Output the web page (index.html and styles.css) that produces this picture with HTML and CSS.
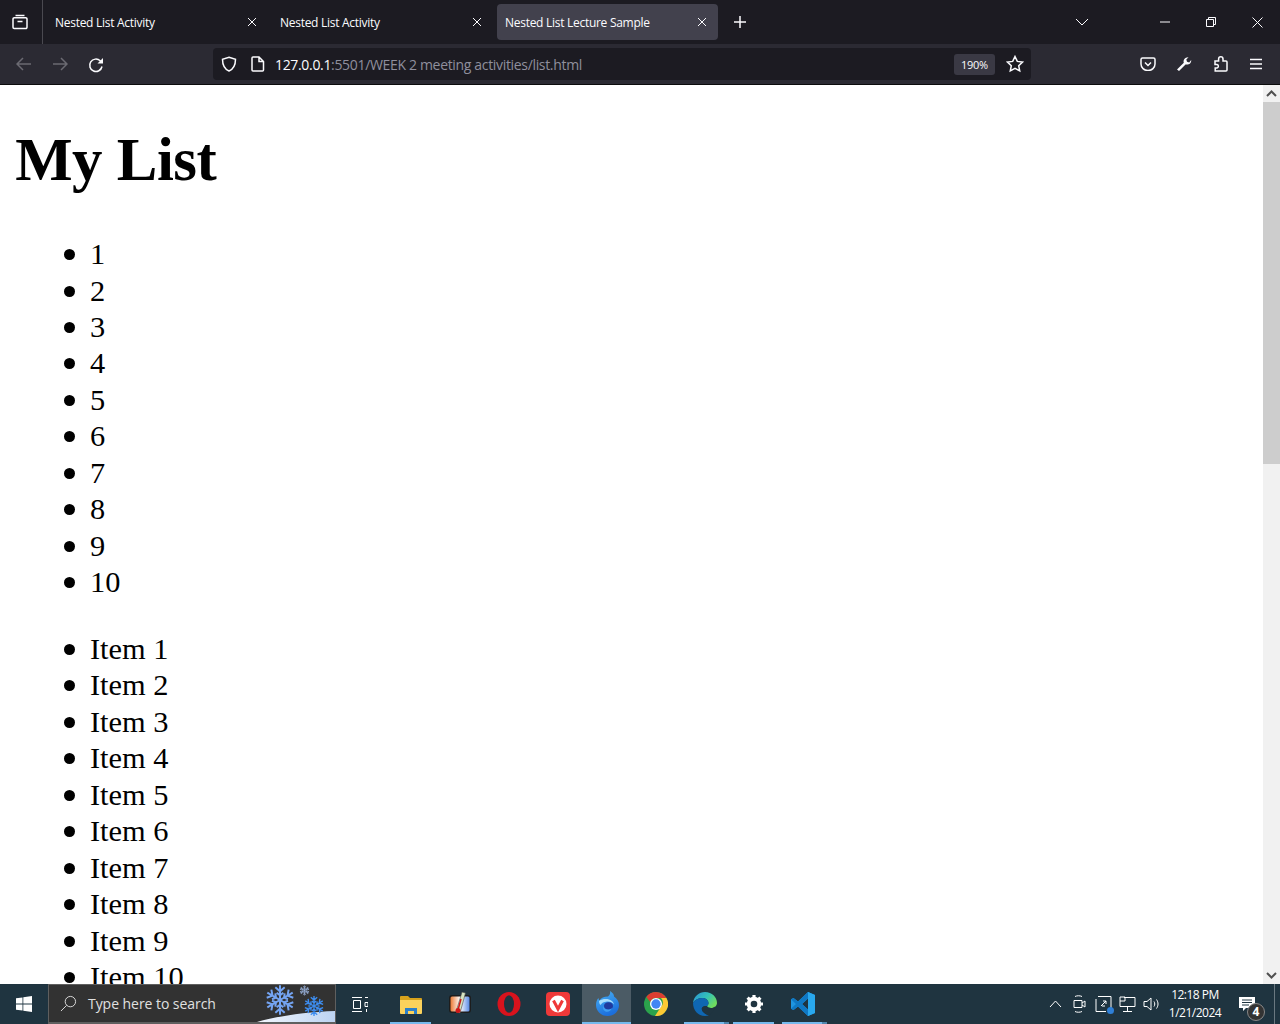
FILE: index.html

```html
<!DOCTYPE html>
<html lang="en">
<head>
  <meta charset="UTF-8" />
  <title>Nested List Lecture Sample</title>
  <link rel="stylesheet" href="styles.css">
</head>
<body>
  <svg class="defs" width="0" height="0">
    <defs>
      <linearGradient id="edgeTop" x1="0" y1="0" x2="1" y2="0.6">
        <stop offset="0" stop-color="#2a8fd8"/>
        <stop offset="0.55" stop-color="#33c2b8"/>
        <stop offset="1" stop-color="#6fdc5e"/>
      </linearGradient>
      <linearGradient id="foxBody" x1="0" y1="0" x2="0.4" y2="1">
        <stop offset="0" stop-color="#49b2f5"/>
        <stop offset="1" stop-color="#1c6fdc"/>
      </linearGradient>
      <linearGradient id="thermo" x1="0" y1="0" x2="1" y2="0">
        <stop offset="0" stop-color="#ec7a35"/>
        <stop offset="0.5" stop-color="#fff"/>
        <stop offset="1" stop-color="#5a8be6"/>
      </linearGradient>
      <linearGradient id="hillFill" x1="0" y1="0" x2="1" y2="0">
        <stop offset="0" stop-color="#f2f6fd"/>
        <stop offset="1" stop-color="#bcd3f2"/>
      </linearGradient>
    </defs>
    <symbol id="flake" viewBox="-12 -12 24 24">
      <g fill="none" stroke-width="1.5">
        <path d="M0 0V-11M-3.500 -9.500L0 -6.500L3.500 -9.500M-2.500 -5.500L0 -3.500L2.500 -5.500"/>
        <path transform="rotate(60)" d="M0 0V-11M-3.500 -9.500L0 -6.500L3.500 -9.500M-2.500 -5.500L0 -3.500L2.500 -5.500"/>
        <path transform="rotate(120)" d="M0 0V-11M-3.500 -9.500L0 -6.500L3.500 -9.500M-2.500 -5.500L0 -3.500L2.500 -5.500"/>
        <path transform="rotate(180)" d="M0 0V-11M-3.500 -9.500L0 -6.500L3.500 -9.500M-2.500 -5.500L0 -3.500L2.500 -5.500"/>
        <path transform="rotate(240)" d="M0 0V-11M-3.500 -9.500L0 -6.500L3.500 -9.500M-2.500 -5.500L0 -3.500L2.500 -5.500"/>
        <path transform="rotate(300)" d="M0 0V-11M-3.500 -9.500L0 -6.500L3.500 -9.500M-2.500 -5.500L0 -3.500L2.500 -5.500"/>
      </g>
    </symbol>
  </svg>

  <header class="tabstrip">
    <div class="tab-manager">
      <svg width="16" height="16" viewBox="0 0 16 16" class="ico"><path d="M3.500 1.500h9M1 5a1.200 1.200 0 0 1 1.200-1.200h11.600A1.200 1.200 0 0 1 15 5v8.300a1.200 1.200 0 0 1-1.200 1.200H2.200A1.200 1.200 0 0 1 1 13.300zM5.500 7.500h5"/></svg>
    </div>
    <div class="tab">
      <span class="tab-title">Nested List Activity</span>
      <svg width="10" height="10" viewBox="0 0 10 10" class="ico thin"><path d="M1 1l8 8M9 1l-8 8"/></svg>
    </div>
    <div class="tab">
      <span class="tab-title">Nested List Activity</span>
      <svg width="10" height="10" viewBox="0 0 10 10" class="ico thin"><path d="M1 1l8 8M9 1l-8 8"/></svg>
    </div>
    <div class="tab active">
      <span class="tab-title">Nested List Lecture Sample</span>
      <svg width="10" height="10" viewBox="0 0 10 10" class="ico thin"><path d="M1 1l8 8M9 1l-8 8"/></svg>
    </div>
    <div class="new-tab">
      <svg width="14" height="14" viewBox="0 0 14 14" class="ico"><path d="M7 1v12M1 7h12"/></svg>
    </div>
    <div class="tab-list">
      <svg width="14" height="8" viewBox="0 0 14 8" class="ico thin"><path d="M1 1l6 6 6-6"/></svg>
    </div>
    <div class="win-btn">
      <svg width="10" height="2" viewBox="0 0 10 2" class="ico thin"><path d="M0 1h10"/></svg>
    </div>
    <div class="win-btn">
      <svg width="10" height="10" viewBox="0 0 10 10" class="ico thin"><path d="M.5 2.500h7v7h-7zM2.500 2.500V.5h7v7h-2"/></svg>
    </div>
    <div class="win-btn">
      <svg width="11" height="11" viewBox="0 0 11 11" class="ico thin"><path d="M.5.5l10 10M10.500.5l-10 10"/></svg>
    </div>
  </header>

  <nav class="navbar">
    <div class="nav-btn dim">
      <svg width="16" height="14" viewBox="0 0 16 14" class="ico"><path d="M15 7H1.500M7 1L1 7l6 6"/></svg>
    </div>
    <div class="nav-btn dim">
      <svg width="16" height="14" viewBox="0 0 16 14" class="ico"><path d="M1 7h13.500M9 1l6 6-6 6"/></svg>
    </div>
    <div class="nav-btn">
      <svg width="16" height="16" viewBox="0 0 16 16" class="ico reload"><path d="M14 9.500A6.200 6.200 0 1 1 12.200 3.800L14 5.500"/><path class="solid" d="M15 1v5.500H9.500z"/></svg>
    </div>
    <div class="urlbar">
      <svg width="16" height="16" viewBox="0 0 16 16" class="ico url-shield"><path d="M8 1.200L14.500 3.200C14.500 9 12.500 13 8 15C3.500 13 1.500 9 1.500 3.200z"/></svg>
      <svg width="14" height="16" viewBox="0 0 14 16" class="ico url-page"><path d="M2 1h6l4.500 4.500v8.500a1 1 0 0 1-1 1H2a1 1 0 0 1-1-1V2a1 1 0 0 1 1-1zM8 1v4.500h4.500"/></svg>
      <span class="url"><span class="host">127.0.0.1</span>:5501/WEEK 2 meeting activities/list.html</span>
      <span class="zoom-badge">190%</span>
      <svg width="18" height="18" viewBox="0 0 18 18" class="ico url-star"><path d="M9 1.500l2.300 4.900 5.200.7-3.800 3.600 1 5.200L9 13.300l-4.700 2.600 1-5.200L1.500 7.100l5.200-.7z"/></svg>
    </div>
    <div class="nav-tools">
      <div class="nav-btn">
        <svg width="16" height="14" viewBox="0 0 16 14" class="ico"><path d="M1 2.500a1.500 1.500 0 0 1 1.500-1.500h11A1.500 1.500 0 0 1 15 2.500V7a7 6.500 0 0 1-14 0zM5 5.500l3 3 3-3"/></svg>
      </div>
      <div class="nav-btn">
        <svg width="16" height="16" viewBox="0 0 16 16" class="ico-fill"><path d="M1 13.500L7.800 6.700C7 4 9 1 12.500 1.200L10.300 3.500l.7 2.200 2.200.7L15.200 4C15.500 7.500 12.500 9.200 9.500 8.400L3 15z"/></svg>
      </div>
      <div class="nav-btn">
        <svg width="16" height="16" viewBox="0 0 16 16" class="ico"><path d="M6 15h8a1 1 0 0 0 1-1V6a1 1 0 0 0-1-1h-3V3a2.200 2.200 0 0 0-4.400 0v2H3v3.500h2a1.800 1.800 0 0 1 0 3.500H3.200V15z"/></svg>
      </div>
      <div class="nav-btn">
        <svg width="14" height="12" viewBox="0 0 14 12" class="ico"><path d="M1 1.500h12M1 6h12M1 10.500h12"/></svg>
      </div>
    </div>
  </nav>

  <div class="viewport">
    <main class="page">
      <h1>My List</h1>
      <ul>
        <li>1</li>
        <li>2</li>
        <li>3</li>
        <li>4</li>
        <li>5</li>
        <li>6</li>
        <li>7</li>
        <li>8</li>
        <li>9</li>
        <li>10</li>
      </ul>
      <ul>
        <li>Item 1</li>
        <li>Item 2</li>
        <li>Item 3</li>
        <li>Item 4</li>
        <li>Item 5</li>
        <li>Item 6</li>
        <li>Item 7</li>
        <li>Item 8</li>
        <li>Item 9</li>
        <li>Item 10</li>
      </ul>
    </main>
    <div class="scrollbar">
      <div class="sb-arrow"><svg width="11" height="7" viewBox="0 0 11 7"><path d="M1 6l4.500-4.500L10 6" fill="none" stroke="#505050" stroke-width="2"/></svg></div>
      <div class="sb-track"><div class="sb-thumb"></div></div>
      <div class="sb-arrow"><svg width="11" height="7" viewBox="0 0 11 7"><path d="M1 1l4.500 4.500L10 1" fill="none" stroke="#505050" stroke-width="2"/></svg></div>
    </div>
  </div>

  <footer class="taskbar">
    <div class="start">
      <svg width="16" height="16" viewBox="0 0 16 16" fill="#fff"><path d="M0 2.300l6.500-.9v6.200H0zM7.300 1.300L16 0v7.600H7.300zM0 8.400h6.500v6.200L0 13.700zM7.300 8.400H16V16l-8.700-1.300z"/></svg>
    </div>
    <div class="search">
      <svg width="17" height="17" viewBox="0 0 18 18" class="ico thin"><circle cx="11" cy="7" r="5.500"/><path d="M7 11l-6 6"/></svg>
      <span class="search-text">Type here to search</span>
      <div class="snow">
        <svg class="hill" width="78" height="11" viewBox="0 0 78 11"><path d="M0 11C20 5 50 1 78 0v11z" fill="url(#hillFill)"/></svg>
        <svg class="flake-a" width="32" height="32"><use href="#flake" stroke="#74a4f2"/></svg>
        <svg class="flake-b" width="11" height="11"><use href="#flake" stroke="#9db6e0"/></svg>
        <svg class="flake-c" width="22" height="22"><use href="#flake" stroke="#3d8df0"/></svg>
      </div>
    </div>
    <div class="task-icons">
      <div class="task-item task-view">
        <svg width="16" height="15" viewBox="0 0 16 15" class="ico thin"><path d="M0 .5h10M0 14.500h10M1.500 3.500h7v8h-7zM13 .5h3M13 5.500h3v4h-3zM14.500 12v3"/></svg>
      </div>
      <div class="task-item running">
        <svg width="22" height="19" viewBox="0 0 22 19"><path d="M0 2a1 1 0 0 1 1-1h7l2 2h11a1 1 0 0 1 1 1v3H0z" fill="#d8a21c"/><path d="M0 5h22v13a1 1 0 0 1-1 1H1a1 1 0 0 1-1-1z" fill="#fbd25c"/><path d="M5 13h12v6h-3v-3H8v3H5z" fill="#2b7fc9"/></svg>
      </div>
      <div class="task-item">
        <svg width="22" height="24" viewBox="0 0 22 24"><rect x="0" y="3" width="22" height="18" rx="3" fill="#1d1d1d"/><rect x="1.500" y="4.500" width="19" height="15" rx="1.500" fill="url(#thermo)"/><path d="M13 0l3.500 1L11 21l-4-1z" fill="#d5e3c0" stroke="#444" stroke-width=".6"/><circle cx="9" cy="18.500" r="2.500" fill="#d01818"/><path d="M9 18l3-11" stroke="#d01818" stroke-width="1.500"/></svg>
      </div>
      <div class="task-item">
        <svg width="24" height="24" viewBox="0 0 24 24"><ellipse cx="12" cy="12" rx="11.500" ry="12" fill="#d8131d"/><ellipse cx="12" cy="12" rx="5" ry="8.800" fill="#1f3440"/></svg>
      </div>
      <div class="task-item">
        <svg width="24" height="24" viewBox="0 0 24 24"><rect width="24" height="24" rx="4" fill="#ef3939"/><circle cx="12" cy="12" r="8.500" fill="#fff"/><path d="M7.500 8.500L12 17l4.500-8.500" fill="none" stroke="#ef3939" stroke-width="3"/></svg>
      </div>
      <div class="task-item current">
        <svg width="24" height="26" viewBox="0 0 24 26"><path d="M15 0c3 2 4 3.500 4 5.500 3 2 5 5 5 8.500 0 6.500-5 11-11.500 11S1 20 1 14C1 11 2 8.500 3.500 7c0 1 .5 2 1 2.500C6 7 9 5.500 13 5.500 15 4 15.500 2 15 0z" fill="url(#foxBody)"/><path d="M4 10c3-2 7-2.500 10-1.500 2.500.8 4.500 2.500 5 5-1.500-2-4-3.300-7-3-3 .3-5.500 1.500-6.500 3.500C4.500 13 4 11.500 4 10z" fill="#a6dcfb"/><ellipse cx="13.500" cy="15" rx="4.500" ry="3.800" fill="#1f3a9e"/><path d="M8 15c1 3 5 5 9 2-1 3-4 4.500-6.500 3.500C8.500 19.500 7.500 17 8 15z" fill="#3f9df0"/></svg>
      </div>
      <div class="task-item">
        <svg width="24" height="24" viewBox="0 0 24 24"><circle cx="12" cy="12" r="12" fill="#2ba24c"/><path d="M12 0a12 12 0 0 1 10.400 6H12a6 6 0 0 0-5.700 4.100L2.300 5A12 12 0 0 1 12 0z" fill="#dc3d31"/><path d="M22.400 6A12 12 0 0 1 11 24l5.800-9A6 6 0 0 0 17 6z" fill="#fcc934"/><circle cx="12" cy="12" r="6" fill="#fff"/><circle cx="12" cy="12" r="4.700" fill="#4285f4"/></svg>
      </div>
      <div class="task-item stacked">
        <svg width="24" height="24" viewBox="0 0 24 24"><path d="M0 11C1 4 6 0 12 0c7 0 12 5 12 11 0 3-3 5-6 5-2 0-4-.7-4-2 2-1.500 2-4 .2-6C11 4.500 3 6 0 11z" fill="url(#edgeTop)"/><path d="M0 11c3-5 11-6.500 14.200-3 1.800 2 1.800 4.500-.2 6-2.500 0-6 .5-5 4 .7 2.500 4 4.500 7 5.200-1.200.5-2.600.8-4 .8C5 24 0 18 0 11z" fill="#0f67b3"/><path d="M14 14c0 1.300 2 2 4 2 1.500 0 3-.5 4-1.500-1 4-3.500 7-6 8.700-3-.7-6.300-2.700-7-5.200-1-3.500 2.500-4 5-4z" fill="#1f3440"/></svg>
      </div>
      <div class="task-item running">
        <svg width="20" height="20" viewBox="0 0 20 20"><circle cx="10" cy="10" r="5.500" fill="none" stroke="#fff" stroke-width="3.500"/><path d="M10 1v18M1 10h18M3.600 3.600l12.800 12.800M16.400 3.600L3.600 16.400" stroke="#fff" stroke-width="3.200"/><circle cx="10" cy="10" r="3.300" fill="#1f3440"/></svg>
      </div>
      <div class="task-item stacked">
        <svg width="24" height="24" viewBox="0 0 24 24"><path d="M17 0l7 3v18l-7 3L7 14.500 2.500 18 0 16.800V7.200L2.500 6 7 9.500zM17 6.500l-6 5.500 6 5.500z" fill="#1f95e0"/><path d="M17 0l7 3v18l-7 3z" fill="#29a8ee"/><path d="M17 6.500V0L7 9.500 2.500 6 0 7.200 5 12l-5 4.800L2.500 18 7 14.500 17 24v-6.500L11 12z" fill="#0f78c4"/></svg>
      </div>
    </div>
    <div class="tray">
      <div class="tray-cell"><svg width="13" height="8" viewBox="0 0 13 8" class="ico thin"><path d="M1 7l5.500-6L12 7"/></svg></div>
      <div class="tray-cell"><svg width="13" height="18" viewBox="0 0 13 18" class="ico thin"><path d="M2 1.500c2-1 5-1 7 0M2 16.500c2 1 5 1 7 0M1 5.500h8v7H1zM9 8l3-2v6l-3-2"/></svg></div>
      <div class="tray-cell">
        <div class="tray-box">
          <svg width="17" height="16" viewBox="0 0 17 16" class="ico thin"><path d="M3 .5h13v11.500M1 15.500V3M1 15.500h10M6 10l5-5M8 5h3v3M10 10H7"/></svg>
          <span class="tray-dot"></span>
        </div>
      </div>
      <div class="tray-cell"><svg width="17" height="16" viewBox="0 0 17 16" class="ico thin"><path d="M5 1.500h11v9H1V5M1 1h5v4H1zM8.500 10.500v4.500M4 15.500h9"/></svg></div>
      <div class="tray-cell"><svg width="17" height="14" viewBox="0 0 17 14" class="ico thin"><path d="M1 4.500h3l4-3.500v12L4 9.500H1zM11 4.500c1 1.500 1 3.500 0 5M13.500 2.500c2 3 2 6 0 9"/></svg></div>
    </div>
    <div class="clock">
      <span>12:18 PM</span>
      <span>1/21/2024</span>
    </div>
    <div class="notify">
      <svg width="16" height="14" viewBox="0 0 16 14" fill="#fff"><path d="M0 0h16v11H7l-3 3v-3H0z"/><path d="M3 3h10M3 5.500h10M3 8h7" stroke="#1f3440"/></svg>
      <span class="notify-count">4</span>
    </div>
    <div class="show-desktop"></div>
  </footer>
</body>
</html>
```

FILE: styles.css

```css
html, body { margin: 0; height: 100%; }
body { display: flex; flex-direction: column; height: 1024px; overflow: hidden; font-family: "Open Sans", "Noto Sans", sans-serif; background: #fff; }
.defs { position: absolute; }

.ico { fill: none; stroke: currentColor; stroke-width: 1.5; flex: none; }
.ico.thin { stroke-width: 1; }
.ico .solid { fill: currentColor; stroke: none; }
.ico-fill { fill: currentColor; flex: none; }

/* tabs */
.tabstrip { display: flex; align-items: center; height: 44px; flex: none; background: #1c1b22; color: #fbfbfe; }
.tab-manager { display: flex; align-items: center; justify-content: center; width: 42px; height: 44px; border-right: 1px solid #4a4950; }
.tab-manager svg { margin-right: 2px; }
.tab { display: flex; align-items: center; justify-content: space-between; width: 221px; height: 36px; box-sizing: border-box; padding: 0 11px 0 8px; margin-left: 4px; border-radius: 4px; font-size: 12px; }
.tab.active { background: #42414d; }
.tab-title { letter-spacing: -0.28px; }
.new-tab { display: flex; align-items: center; justify-content: center; width: 44px; height: 44px; }
.tab-list { display: flex; align-items: center; justify-content: center; margin-left: auto; width: 46px; height: 44px; margin-right: 37px; }
.win-btn { display: flex; align-items: center; justify-content: center; width: 46px; height: 44px; }

/* nav bar */
.navbar { display: flex; align-items: center; height: 40px; flex: none; padding: 0 6px; border-bottom: 1px solid #0c0c0d; background: #2b2a33; color: #fbfbfe; }
.nav-btn { display: flex; align-items: center; justify-content: center; width: 36px; height: 32px; flex: none; }
.nav-btn.dim { color: #6b6a72; }
.reload { margin-top: 1px; }
.urlbar { display: flex; align-items: center; width: 818px; height: 32px; margin-left: 99px; padding: 0 7px 0 8px; box-sizing: border-box; border-radius: 4px; background: #1c1b22; font-size: 14px; color: #8f8f9d; }
.url-shield, .url-page, .url-star { color: #fbfbfe; }
.url-page { margin-left: 14px; }
.url { margin-left: 10px; white-space: nowrap; letter-spacing: -0.33px; }
.host { color: #fbfbfe; }
.zoom-badge { display: flex; align-items: center; justify-content: center; width: 41px; height: 21px; margin-left: auto; border-radius: 3px; background: #3a3944; color: #fbfbfe; font-size: 11px; letter-spacing: -0.3px; }
.url-star { margin-left: 11px; }
.nav-tools { display: flex; align-items: center; margin-left: auto; }

/* page content, zoomed to 190% */
.viewport { display: flex; flex: 1; min-height: 0; }
.page { flex: 1; overflow: hidden; padding: 0 15.2px; font-family: "Liberation Serif", serif; font-size: 30.4px; line-height: 36.45px; color: #000; }
h1 { margin: 40px 0 41.1px; font-size: 60.8px; line-height: 70px; letter-spacing: -0.45px; }
ul { margin: 30.4px 0; padding-left: 74.8px; list-style: none; }
h1 + ul { margin-top: 0; }
li { position: relative; }
li::before { content: ""; position: absolute; left: -26px; top: 13px; width: 11px; height: 11px; border-radius: 50%; background: #000; }

.scrollbar { display: flex; flex-direction: column; width: 17px; flex: none; background: #f1f1f1; }
.sb-arrow { display: flex; align-items: center; justify-content: center; height: 17px; flex: none; }
.sb-track { flex: 1; }
.sb-thumb { height: 362px; background: #cdcdcd; }

/* windows taskbar */
.taskbar { display: flex; align-items: center; height: 40px; flex: none; background: #1f3440; color: #fff; }
.start { display: flex; align-items: center; justify-content: center; width: 48px; height: 40px; flex: none; }
.search { position: relative; display: flex; align-items: center; width: 288px; height: 40px; box-sizing: border-box; padding-left: 11px; border: 1px solid #5f5f5f; border-bottom-width: 2px; background: #323232; color: #e0e0e0; overflow: hidden; flex: none; }
.search-text { margin-left: 11px; font-size: 14px; letter-spacing: -0.05px; }
.snow { position: absolute; right: 0; bottom: 0; width: 80px; height: 40px; }
.hill { position: absolute; right: 0; bottom: 0; }
.flake-a { position: absolute; left: 9px; top: 2px; }
.flake-b { position: absolute; left: 44px; top: 3px; }
.flake-c { position: absolute; left: 48px; top: 13px; }
.task-icons { display: flex; flex: none; margin-left: 1px; }
.task-item { position: relative; display: flex; align-items: center; justify-content: center; width: 49px; height: 40px; box-sizing: border-box; flex: none; }
.task-view svg { margin-right: 3px; }
.task-item.running::after, .task-item.stacked::after, .task-item.current::after { content: ""; position: absolute; left: 4px; right: 4px; bottom: 0; height: 2px; background: #76b9ed; }
.task-item.current { background: #4b5b65; }
.task-item.current::after { left: 0; right: 0; }
.task-item.stacked::after { right: 0; background: linear-gradient(to right, #76b9ed 40px, #4f86ad 40px); }
.tray { display: flex; align-items: center; margin-left: auto; color: #fff; }
.tray-cell { display: flex; align-items: center; justify-content: center; width: 24px; height: 40px; }
.tray-box { position: relative; display: flex; }
.tray-dot { position: absolute; right: -2px; bottom: -2px; width: 7px; height: 7px; border-radius: 50%; background: #2f7fd6; }
.clock { display: flex; flex-direction: column; align-items: center; width: 62px; margin-left: 1px; font-size: 12px; line-height: 18px; letter-spacing: -0.5px; }
.notify { position: relative; display: flex; align-items: center; justify-content: center; width: 48px; height: 40px; padding-right: 6px; box-sizing: border-box; flex: none; }
.notify-count { position: absolute; right: 9px; bottom: 3px; width: 16px; height: 16px; border-radius: 50%; border: 1px solid #888; background: #333; color: #fff; font-size: 12px; font-weight: 700; line-height: 16px; text-align: center; }
.show-desktop { width: 6px; height: 40px; flex: none; border-left: 1px solid #6a7880; box-sizing: border-box; }
```
